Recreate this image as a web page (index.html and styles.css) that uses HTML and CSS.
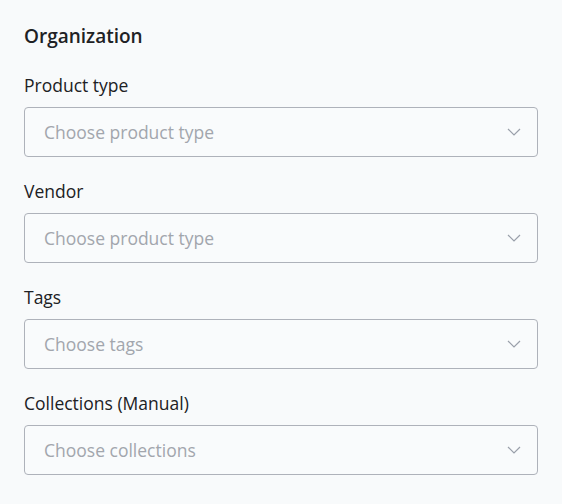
FILE: index.html
```html
<!DOCTYPE html>
<html>
<head>
<title>Organization</title>
<link rel="stylesheet" href="styles.css">
</head>
<body>
<div class="card">
    <h2 class="card-title">Organization</h2>

    <div class="field">
        <label class="field-label">Product type</label>
        <div class="select">
            <span class="select-text">Choose product type</span>
            <svg class="chevron" width="14" height="8" viewBox="0 0 14 8"><path d="M1 1l6 6 6-6" fill="none" stroke="#9aa0aa" stroke-width="1.2"/></svg>
        </div>
    </div>

    <div class="field">
        <label class="field-label">Vendor</label>
        <div class="select">
            <span class="select-text">Choose product type</span>
            <svg class="chevron" width="14" height="8" viewBox="0 0 14 8"><path d="M1 1l6 6 6-6" fill="none" stroke="#9aa0aa" stroke-width="1.2"/></svg>
        </div>
    </div>

    <div class="field">
        <label class="field-label">Tags</label>
        <div class="select">
            <span class="select-text">Choose tags</span>
            <svg class="chevron" width="14" height="8" viewBox="0 0 14 8"><path d="M1 1l6 6 6-6" fill="none" stroke="#9aa0aa" stroke-width="1.2"/></svg>
        </div>
    </div>

    <div class="field">
        <label class="field-label">Collections (Manual)</label>
        <div class="select">
            <span class="select-text">Choose collections</span>
            <svg class="chevron" width="14" height="8" viewBox="0 0 14 8"><path d="M1 1l6 6 6-6" fill="none" stroke="#9aa0aa" stroke-width="1.2"/></svg>
        </div>
    </div>
</div>
</body>
</html>
```

FILE: styles.css
```css
html, body{
    margin:0;
    padding:0;
    background:#f8fafb;
}
body{
    font-family:"Open Sans", "Noto Sans", sans-serif;
    color:#202124;
}
.card{
    padding:23px 24px 0 24px;
    width:514px;
}
.card-title{
    margin:0 0 24px 0;
    font-size:19px;
    font-weight:600;
    line-height:26px;
}
.field{
    margin-bottom:22px;
}
.field-label{
    display:block;
    font-size:17.5px;
    line-height:24px;
    margin-bottom:10px;
}
.select{
    height:48px;
    border:1px solid #aeb2ba;
    border-radius:4px;
    display:flex;
    align-items:center;
    justify-content:space-between;
    padding:0 16px 0 19px;
    background:#f9fbfc;
}
.select-text{
    font-size:17.5px;
    color:#a2a6ad;
}
.chevron{
    display:block;
}
```
